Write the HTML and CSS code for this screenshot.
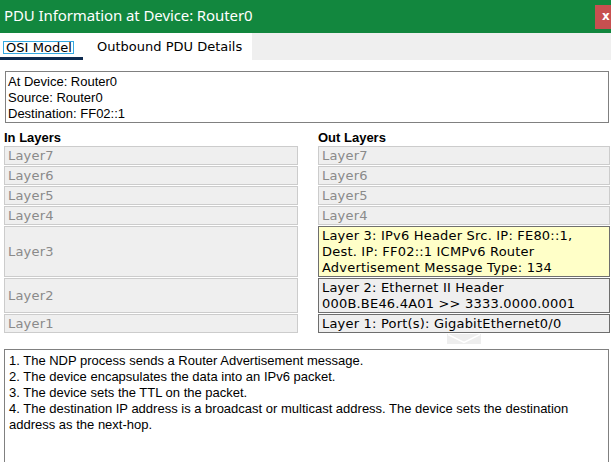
FILE: index.html
```html
<!DOCTYPE html>
<html>
<head>
<meta charset="utf-8">
<link rel="stylesheet" href="styles.css">
</head>
<body>
<div class="window">
  <div class="titlebar">
    <span class="title">PDU Information at Device: Router0</span>
    <span class="close">x</span>
  </div>
  <div class="tabs">
    <div class="tab active"><span class="focus">OSI Model</span></div>
    <div class="tab">Outbound PDU Details</div>
    <div class="tab-fill"></div>
  </div>
  <div class="info">
    <div>At Device: Router0</div>
    <div>Source: Router0</div>
    <div>Destination: FF02::1</div>
  </div>
  <div class="layers">
    <div class="head">In Layers</div>
    <div class="head out-head">Out Layers</div>
    <div class="box">Layer7</div>
    <div class="box">Layer7</div>
    <div class="box">Layer6</div>
    <div class="box">Layer6</div>
    <div class="box">Layer5</div>
    <div class="box">Layer5</div>
    <div class="box">Layer4</div>
    <div class="box">Layer4</div>
    <div class="box">Layer3</div>
    <div class="box on yellow">Layer 3: IPv6 Header Src. IP: FE80::1,<br>Dest. IP: FF02::1 ICMPv6 Router<br>Advertisement Message Type: 134</div>
    <div class="box">Layer2</div>
    <div class="box on">Layer 2: Ethernet II Header<br>000B.BE46.4A01 &gt;&gt; 3333.0000.0001</div>
    <div class="box">Layer1</div>
    <div class="box on">Layer 1: Port(s): GigabitEthernet0/0</div>
    <div></div>
    <div class="arrow-cell">
      <svg width="34" height="10" viewBox="0 0 34 10"><rect x="0" y="0" width="34" height="10" fill="#eeeeee"/><polyline points="1,0.5 17,8.5 33,0.5" fill="none" stroke="#ffffff" stroke-width="1.5"/></svg>
    </div>
  </div>
  <div class="desc">
    <div>1. The NDP process sends a Router Advertisement message.</div>
    <div>2. The device encapsulates the data into an IPv6 packet.</div>
    <div>3. The device sets the TTL on the packet.</div>
    <div>4. The destination IP address is a broadcast or multicast address. The device sets the destination address as the next-hop.</div>
  </div>
</div>
</body>
</html>
```

FILE: styles.css
```css
html, body {
  margin: 0;
  padding: 0;
  background: #ffffff;
}
.window {
  width: 611px;
  height: 462px;
  overflow: hidden;
  background: #ffffff;
}
.titlebar {
  height: 33px;
  background: #12873e;
  display: flex;
  align-items: flex-start;
  justify-content: space-between;
}
.title {
  color: #ffffff;
  font-family: "Noto Sans", sans-serif;
  font-size: 15px;
  line-height: 20px;
  padding: 5px 0 0 4px;
  letter-spacing: -0.1px;
}
.close {
  margin-top: 5px;
  width: 16px;
  height: 24px;
  background: #c75050;
  color: #ffffff;
  font-family: "DejaVu Sans", sans-serif;
  font-weight: bold;
  font-size: 12px;
  line-height: 22px;
  padding-left: 7px;
  box-sizing: border-box;
  overflow: hidden;
}
.tabs {
  display: flex;
  height: 27px;
  font-family: "DejaVu Sans", sans-serif;
  font-size: 13px;
}
.tab {
  background: #ffffff;
  color: #000000;
  line-height: 16px;
  padding: 6px 0 0 14px;
  width: 169px;
  box-sizing: border-box;
}
.tab.active {
  width: 83px;
  padding: 7px 0 0 3px;
  border-bottom: 3px solid #0e2a4f;
}
.focus {
  display: inline-block;
  border: 1px solid #35a9e1;
  padding: 0 1px 0 2px;
  line-height: 11px;
  height: 11px;
  letter-spacing: 0.05px;
}
.tab-fill {
  flex: 1;
  background: #efefef;
}
.info {
  margin: 11px 2px 0 5px;
  border: 1px solid #808080;
  padding: 2px 0 0 2px;
  box-sizing: border-box;
  height: 52px;
  font-family: "Liberation Sans", sans-serif;
  font-size: 13px;
  line-height: 16px;
  color: #000000;
}
.layers {
  display: grid;
  grid-template-columns: 294px 292px;
  column-gap: 20px;
  row-gap: 1px;
  padding: 8px 0 0 4px;
  font-family: "DejaVu Sans", sans-serif;
  font-size: 13px;
  letter-spacing: 0.2px;
}
.head {
  font-family: "Liberation Sans", sans-serif;
  font-weight: bold;
  font-size: 13px;
  line-height: 14px;
  letter-spacing: 0;
  color: #000000;
}
.box {
  background: #efefef;
  border: 1px solid #cccccc;
  color: #8a8a8a;
  padding: 0 3px;
  min-height: 17px;
  line-height: 17px;
  display: flex;
  align-items: center;
  white-space: nowrap;
}
.box.on {
  border-color: #6e6e6e;
  color: #000000;
  line-height: 16px;
  min-height: 16px;
  padding: 1px 3px 0 3px;
  display: block;
}
.box.yellow {
  background: #ffffc8;
}
.arrow-cell {
  display: flex;
  padding-left: 129px;
  height: 10px;
}
.desc {
  margin: 5px 2px 0 4px;
  height: 130px;
  border: 1px solid #808080;
  padding: 3px 6px 0 4px;
  box-sizing: border-box;
  font-family: "Liberation Sans", sans-serif;
  font-size: 13px;
  line-height: 16px;
  color: #000000;
}
```
